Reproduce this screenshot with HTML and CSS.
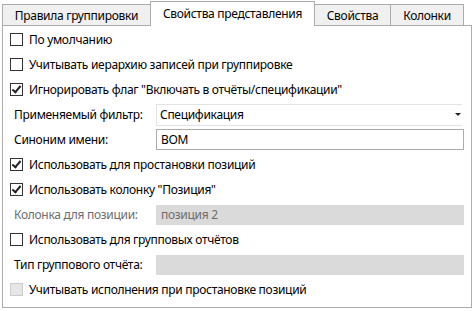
FILE: index.html
```html
<!DOCTYPE html>
<html lang="ru">
<head>
  <meta charset="UTF-8" />
  <title>Свойства представления</title>
  <link rel="stylesheet" href="styles.css">
</head>
<body>
  <div class="tabs">
    <div class="tab" style="width: 148px">Правила группировки</div>
    <div class="tab active" style="width: 165px">Свойства представления</div>
    <div class="tab" style="width: 75px">Свойства</div>
    <div class="tab" style="width: 74px">Колонки</div>
  </div>

  <div class="panel">
    <div class="row">
      <span class="box"></span>
      <span>По умолчанию</span>
    </div>
    <div class="row">
      <span class="box"></span>
      <span>Учитывать иерархию записей при группировке</span>
    </div>
    <div class="row">
      <span class="box checked"></span>
      <span>Игнорировать флаг "Включать в отчёты/спецификации"</span>
    </div>
    <div class="row field-row">
      <span class="label">Применяемый фильтр:</span>
      <div class="combo">
        <span>Спецификация</span>
        <span class="arrow"></span>
      </div>
    </div>
    <div class="row field-row">
      <span class="label">Синоним имени:</span>
      <div class="input">BOM</div>
    </div>
    <div class="row">
      <span class="box checked"></span>
      <span>Использовать для простановки позиций</span>
    </div>
    <div class="row">
      <span class="box checked"></span>
      <span>Использовать колонку "Позиция"</span>
    </div>
    <div class="row field-row">
      <span class="label disabled">Колонка для позиции:</span>
      <div class="input off">позиция 2</div>
    </div>
    <div class="row">
      <span class="box"></span>
      <span>Использовать для групповых отчётов</span>
    </div>
    <div class="row field-row">
      <span class="label">Тип группового отчёта:</span>
      <div class="input off"></div>
    </div>
    <div class="row">
      <span class="box off"></span>
      <span>Учитывать исполнения при простановке позиций</span>
    </div>
  </div>
</body>
</html>
```

FILE: styles.css
```css
body {
  margin: 0;
  padding: 1px 0 0 2px;
  font-family: "Noto Sans", "Open Sans", sans-serif;
  font-size: 12px;
  letter-spacing: -0.3px;
  color: #000;
  background-color: #fff;
  width: 470px;
}

.tabs {
  display: flex;
  align-items: flex-end;
  height: 24px;
  position: relative;
  z-index: 1;
}

.tab {
  box-sizing: border-box;
  height: 21px;
  border: 1px solid #acacac;
  border-bottom: none;
  border-right: none;
  background-color: #f0f0f0;
  display: flex;
  justify-content: center;
  align-items: center;
  padding-top: 1px;
}

.tab:nth-child(4) {
  border-right: 1px solid #acacac;
}

.tab.active {
  background-color: #fff;
  border-right: 1px solid #acacac;
  margin-bottom: -1px;
  height: 25px;
  padding-bottom: 2px;
}

.tab.active + .tab {
  border-left: none;
}

.panel {
  box-sizing: border-box;
  width: 470px;
  height: 283px;
  border: 1px solid #acacac;
  padding: 1px 0 0 7px;
}

.row {
  height: 25px;
  display: flex;
  align-items: center;
  gap: 6px;
}

.box {
  box-sizing: border-box;
  width: 13px;
  height: 13px;
  border: 1px solid #333;
  background-color: #fff;
  position: relative;
}

.box.checked::after {
  content: "";
  position: absolute;
  left: 3px;
  top: 0px;
  width: 3px;
  height: 7px;
  border: solid #222;
  border-width: 0 2px 2px 0;
  transform: rotate(40deg);
}

.box.off {
  border-color: #cccccc;
  background-color: #e6e6e6;
}

.field-row {
  gap: 0;
}

.label {
  width: 142px;
  padding-left: 4px;
}

.label.disabled {
  color: #6d6d6d;
}

.combo {
  box-sizing: border-box;
  width: 306px;
  height: 22px;
  border: 1px solid #e3e3e3;
  border-right: none;
  display: flex;
  align-items: center;
  justify-content: space-between;
  padding: 0 0 0 3px;
}

.arrow {
  width: 0;
  height: 0;
  border-left: 3px solid transparent;
  border-right: 3px solid transparent;
  border-top: 3px solid #222;
  margin-right: 1px;
}

.input {
  box-sizing: border-box;
  width: 308px;
  height: 21px;
  border: 1px solid #ababab;
  display: flex;
  align-items: center;
  padding-left: 4px;
}

.input.off {
  border: none;
  height: 20px;
  background-color: #dadada;
  color: #6d6d6d;
  padding-left: 5px;
}
```
